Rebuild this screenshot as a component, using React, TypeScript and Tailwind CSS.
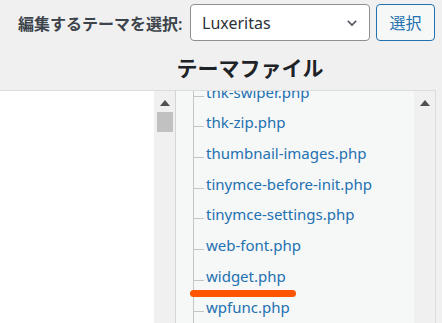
import React from "react";

const files = [
  "thk-swiper.php",
  "thk-zip.php",
  "thumbnail-images.php",
  "tinymce-before-init.php",
  "tinymce-settings.php",
  "web-font.php",
  "widget.php",
  "wpfunc.php",
];

const Up = () => (
  <svg width="10" height="6" viewBox="0 0 10 6">
    <path d="M0 6 L5 0 L10 6 Z" fill="#505050" />
  </svg>
);

export default function App() {
  return (
    <div
      className="w-[442px] h-[323px] overflow-hidden bg-[#f0f0f1] relative"
      style={{ fontFamily: '"Noto Sans", "Noto Sans CJK JP", sans-serif' }}
    >
      <div className="flex items-start h-[48px] pt-[4px]">
        <div className="w-[190px] h-[40px] flex items-center pl-[18px] text-[16px] font-semibold text-[#3c434a] whitespace-nowrap">
          編集するテーマを選択:
        </div>
        <div className="w-[180px] h-[37px] border border-[#8c8f94] rounded-[4px] bg-white flex items-center justify-between pl-[11px] pr-[10px] text-[16px] text-[#2c3338]">
          <span>Luxeritas</span>
          <svg width="14" height="14" viewBox="0 0 20 20">
            <path d="M4 7 L10 13 L16 7" stroke="#50575e" strokeWidth="2.2" fill="none" />
          </svg>
        </div>
        <div className="ml-[6px] w-[59px] h-[37px] border border-[#2271b1] rounded-[4px] bg-[#f6f7f7] flex items-center justify-center text-[16px] text-[#2271b1]">
          選択
        </div>
      </div>
      <div className="h-[42px] pl-[176px] flex items-center">
        <div className="w-[148px] text-center text-[21px] font-bold text-[#1d2327] whitespace-nowrap">
          テーマファイル
        </div>
      </div>
      <div className="flex h-[233px]">
        <div className="w-[176px] flex border-t border-[#dcdcde] border-r border-r-[#d5d5d5]">
          <div className="w-[154px] bg-white" />
          <div className="w-[21px] bg-[#f0f0f0] flex flex-col items-center pt-[9px]">
            <Up />
            <div className="mt-[6px] w-[16px] h-[20px] bg-[#c1c1c1]" />
          </div>
        </div>
        <div className="w-[260px] flex border-t border-[#dcdcde] border-r border-r-[#dcdcde] bg-[#f6f7f7]">
          <div className="w-[238px] relative overflow-hidden">
            <div className="absolute left-[17px] top-0 bottom-0 w-px bg-[#c3c4c7]" />
            <div className="flex flex-col mt-[-19px]">
              {files.map((f) => (
                <div key={f} className="h-[30.7px] flex items-end relative">
                  <div className="absolute left-[17px] bottom-[6px] w-[11px] h-px bg-[#c3c4c7]" />
                  <span className="ml-[30px] text-[15px] leading-[22px] text-[#2271b1] whitespace-nowrap">
                    {f}
                  </span>
                </div>
              ))}
            </div>
          </div>
          <div className="w-[21px] bg-[#f0f0f0] flex flex-col items-center pt-[9px]">
            <Up />
          </div>
        </div>
      </div>
      <div className="absolute left-[190px] top-[290px] w-[106px] h-[7px] rounded-full bg-[#ff5400]" />
    </div>
  );
}
